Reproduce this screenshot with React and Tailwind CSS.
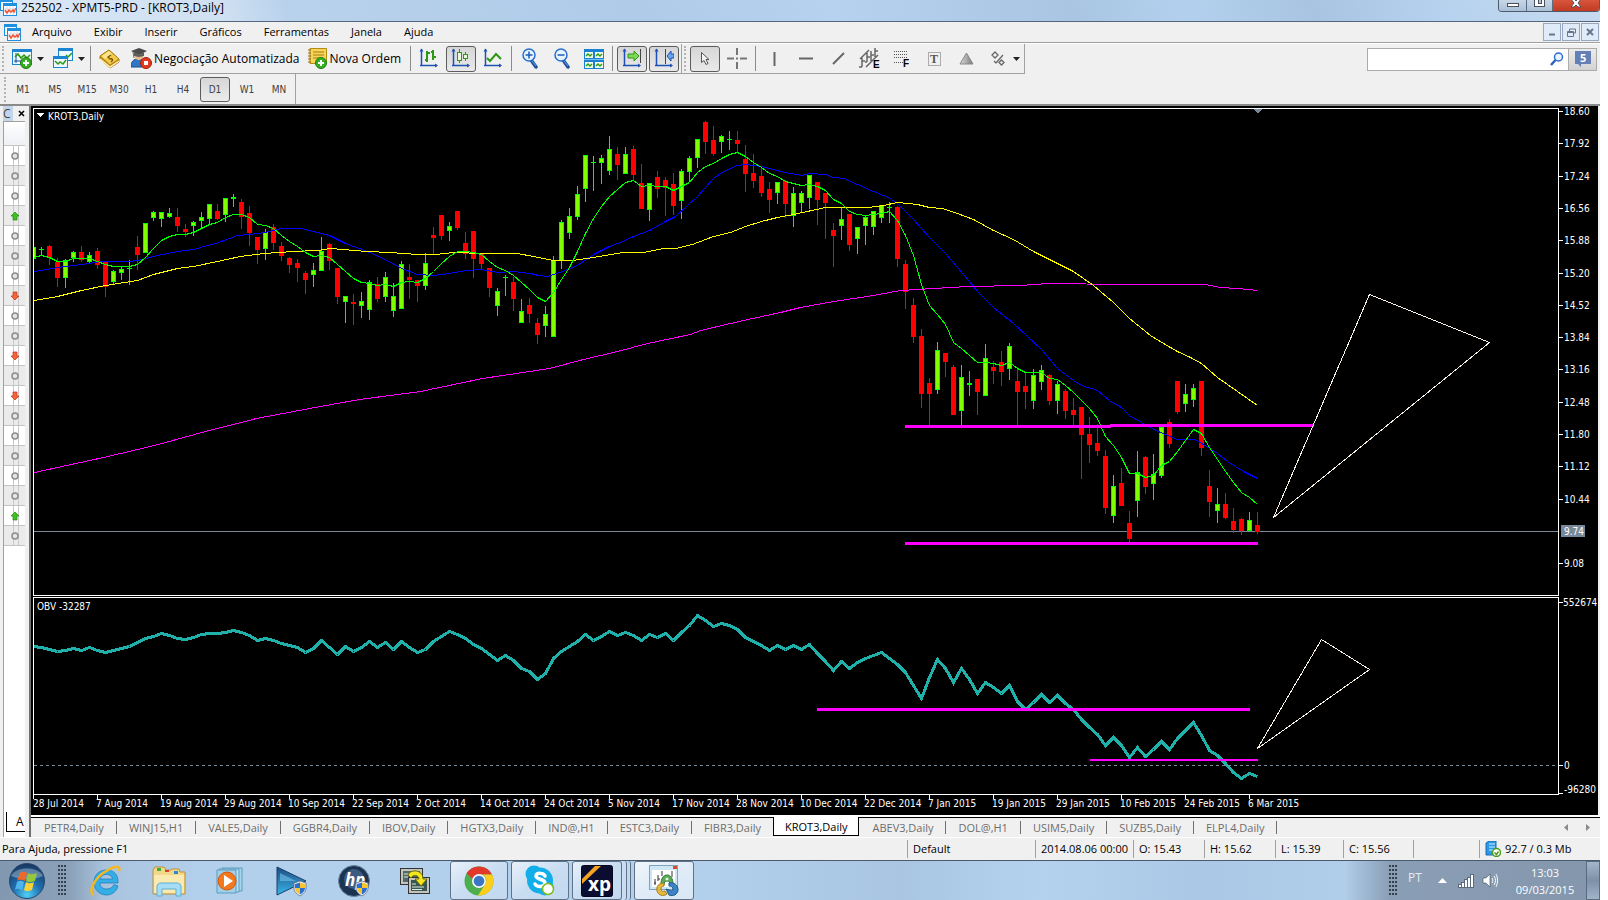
import { useState } from 'react';

// [direction, high, bodyTop, bodyBottom, low]
const CANDLES = [
  ['u', 247, 247, 259, 259], ['u', 247, 249, 250, 255], ['d', 245, 246, 258, 265], ['d', 258, 262, 278, 287],
  ['u', 259, 260, 278, 288], ['u', 251, 252, 258, 262], ['d', 246, 252, 260, 262], ['u', 252, 255, 262, 263],
  ['d', 248, 251, 265, 269], ['d', 262, 262, 287, 297], ['u', 270, 271, 282, 285], ['u', 267, 269, 273, 280],
  ['u', 260, 268, 269, 285], ['d', 236, 247, 255, 270], ['u', 223, 223, 253, 253], ['u', 211, 212, 218, 221],
  ['u', 212, 212, 219, 227], ['u', 208, 213, 217, 218], ['d', 208, 217, 226, 232], ['d', 224, 229, 232, 237],
  ['u', 221, 222, 226, 236], ['u', 212, 217, 221, 228], ['u', 204, 204, 219, 224], ['d', 204, 211, 219, 220],
  ['u', 198, 198, 215, 222], ['u', 194, 197, 199, 207], ['d', 199, 202, 217, 229], ['d', 206, 213, 233, 246],
  ['d', 237, 237, 250, 264], ['u', 229, 232, 249, 260], ['d', 224, 227, 243, 250], ['d', 242, 246, 256, 261],
  ['d', 257, 258, 265, 273], ['d', 259, 263, 268, 282], ['d', 271, 273, 280, 294], ['u', 263, 270, 275, 287],
  ['u', 237, 251, 271, 271], ['d', 243, 244, 261, 270], ['d', 268, 268, 297, 304], ['u', 296, 296, 302, 323],
  ['d', 294, 302, 304, 325], ['u', 292, 301, 306, 318], ['u', 280, 282, 310, 320], ['d', 277, 284, 299, 302],
  ['u', 272, 277, 297, 302], ['u', 283, 296, 311, 317], ['u', 261, 264, 309, 309], ['d', 264, 277, 280, 299],
  ['d', 280, 280, 286, 302], ['u', 253, 263, 286, 290], ['d', 227, 235, 238, 254], ['d', 215, 215, 236, 240],
  ['u', 222, 226, 231, 241], ['d', 211, 211, 228, 230], ['d', 232, 243, 254, 259], ['d', 231, 231, 259, 278],
  ['d', 253, 253, 264, 269], ['d', 268, 268, 288, 297], ['u', 288, 291, 306, 316], ['u', 275, 277, 278, 296],
  ['d', 277, 282, 299, 311], ['u', 299, 311, 323, 323], ['d', 298, 305, 314, 323], ['d', 318, 323, 335, 344],
  ['u', 306, 314, 326, 337], ['u', 256, 260, 337, 337], ['u', 220, 222, 261, 269], ['u', 208, 216, 233, 239],
  ['u', 186, 194, 217, 220], ['u', 155, 155, 189, 202], ['u', 156, 162, 163, 191], ['u', 155, 158, 163, 184],
  ['u', 136, 149, 171, 175], ['d', 147, 154, 165, 180], ['u', 147, 154, 174, 174], ['d', 146, 149, 175, 180],
  ['d', 164, 183, 209, 209], ['u', 183, 183, 210, 221], ['d', 171, 177, 189, 198], ['d', 177, 180, 188, 216],
  ['d', 173, 184, 206, 215], ['u', 169, 171, 201, 219], ['u', 156, 158, 172, 182], ['u', 139, 139, 158, 168],
  ['d', 121, 122, 142, 154], ['d', 126, 140, 154, 156], ['u', 135, 136, 142, 153], ['u', 131, 139, 140, 150],
  ['d', 131, 140, 144, 152], ['d', 145, 159, 174, 192], ['d', 154, 173, 181, 188], ['d', 168, 176, 193, 197],
  ['d', 182, 189, 200, 213], ['u', 182, 182, 193, 204], ['d', 180, 181, 204, 218], ['u', 187, 193, 216, 227],
  ['u', 191, 193, 203, 212], ['u', 175, 175, 198, 209], ['d', 182, 182, 200, 225], ['d', 193, 193, 203, 239],
  ['d', 223, 230, 236, 267], ['u', 208, 219, 226, 240], ['d', 214, 214, 245, 251], ['u', 227, 227, 239, 254],
  ['u', 215, 217, 226, 245], ['u', 211, 211, 227, 235], ['u', 205, 205, 218, 223], ['u', 202, 207, 208, 223],
  ['d', 206, 207, 259, 267], ['d', 260, 264, 292, 309], ['d', 298, 305, 337, 343], ['d', 329, 336, 394, 408],
  ['d', 378, 383, 394, 425], ['u', 342, 350, 390, 394], ['d', 353, 353, 362, 377], ['d', 365, 367, 415, 415],
  ['u', 365, 377, 411, 425], ['u', 371, 383, 385, 396], ['d', 379, 379, 392, 415], ['u', 344, 358, 396, 396],
  ['d', 361, 367, 371, 384], ['d', 351, 362, 372, 386], ['u', 343, 346, 369, 380], ['d', 367, 381, 392, 425],
  ['d', 372, 386, 392, 409], ['u', 369, 375, 401, 409], ['u', 365, 370, 382, 390], ['d', 374, 375, 401, 405],
  ['u', 381, 384, 401, 414], ['d', 389, 391, 411, 419], ['d', 398, 410, 415, 425], ['d', 407, 407, 435, 479],
  ['d', 417, 434, 445, 463], ['d', 424, 443, 451, 456], ['d', 450, 456, 508, 514], ['u', 475, 486, 516, 523],
  ['d', 468, 483, 506, 506], ['d', 511, 523, 539, 542], ['u', 451, 472, 501, 517], ['d', 456, 457, 487, 494],
  ['u', 454, 474, 484, 500], ['u', 426, 427, 476, 478], ['d', 419, 422, 444, 448], ['d', 381, 381, 412, 414],
  ['u', 384, 394, 404, 412], ['u', 384, 388, 400, 407], ['d', 381, 381, 448, 456], ['d', 470, 486, 502, 517],
  ['u', 488, 504, 511, 523], ['d', 493, 504, 518, 519], ['d', 508, 521, 530, 533], ['d', 518, 519, 531, 535],
  ['u', 512, 520, 531, 531], ['d', 512, 525, 532, 534],
];

const MA_FAST = [
  257, 255, 257, 261, 261, 258, 258, 258, 261, 264, 266, 266, 266, 264, 257, 248, 240, 236, 234, 234, 232, 228, 224, 222,
  217, 214, 214, 217, 224, 225, 228, 235, 241, 246, 252, 256, 255, 257, 264, 271, 278, 282, 283, 285, 284, 286, 282, 281,
  282, 278, 271, 263, 256, 251, 251, 252, 254, 261, 267, 270, 275, 282, 289, 297, 301, 292, 279, 267, 251, 233, 218, 206,
  196, 189, 182, 180, 186, 185, 186, 186, 190, 186, 182, 172, 166, 163, 158, 154, 152, 156, 162, 167, 173, 176, 181, 183,
  185, 184, 186, 190, 199, 203, 211, 214, 215, 214, 213, 211, 220, 235, 255, 284, 305, 314, 324, 342, 348, 355, 362, 362,
  363, 365, 362, 368, 372, 372, 372, 378, 379, 385, 392, 400, 408, 418, 436, 445, 457, 473, 473, 477, 475, 465, 461, 451,
  440, 429, 433, 447, 459, 471, 482, 492, 497, 504,
];

const OBV = [
  646, 647, 649, 651, 650, 648, 650, 647, 650, 652, 650, 648, 646, 642, 638, 636, 633, 635, 638, 639, 637, 634, 633, 633,
  632, 630, 632, 635, 640, 638, 640, 643, 645, 647, 652, 648, 640, 647, 654, 646, 651, 647, 641, 647, 642, 649, 641, 647,
  652, 649, 641, 636, 631, 634, 638, 644, 648, 654, 660, 655, 660, 668, 671, 679, 673, 658, 651, 646, 641, 634, 640, 636,
  631, 635, 632, 635, 640, 634, 637, 633, 640, 632, 625, 615, 620, 626, 623, 625, 629, 637, 641, 645, 650, 645, 649, 645,
  649, 644, 653, 661, 670, 661, 668, 662, 658, 655, 652, 658, 664, 672, 685, 698, 677, 659, 668, 682, 668, 679, 693, 682,
  687, 693, 685, 701, 709, 702, 694, 702, 695, 703, 709, 719, 727, 734, 745, 737, 745, 757, 747, 756, 749, 741, 749, 738,
  730, 722, 735, 750, 755, 763, 772, 778, 773, 776,
];

const MA_BLUE =
  '34,271 57,267 89,263 100,261 129,261 137,260 157,255 177,251 193,249 218,242 237,235 249,234 265,232 280,228 300,228 313,231 329,235 345,243 367,251 387,260 399,267 417,274 433,275 449,273 465,270 481,269 497,272 513,271 530,273 538,275 547,276 562,271 577,265 593,254 609,246 620,242 633,236 649,230 665,221 675,216 687,205 697,196 713,178 723,171 737,165 745,164 761,166 780,171 801,175 809,173 825,174 833,177 843,178 857,184 873,191 888,197 897,203 913,219 929,237 945,253 969,281 977,291 993,307 1013,323 1041,349 1057,368 1073,380 1081,385 1097,390 1110,401 1121,407 1129,415 1153,429 1177,439 1195,439 1217,453 1227,461 1243,471 1257,478';
const MA_YELLOW =
  '34,300 57,296 81,290 105,285 137,280 153,274 177,268 193,266 217,261 240,256 263,253 293,251 317,250 330,248 342,249 367,251 390,252 417,254 435,254 453,252 483,253 517,253 533,256 553,260 572,260 593,257 623,252 643,252 663,248 675,248 692,244 713,236 730,232 745,226 761,221 777,217 793,214 825,207 868,207 883,205 897,202 917,204 929,207 942,208 957,213 973,219 993,230 1013,239 1033,251 1057,263 1073,271 1093,285 1113,302 1129,318 1150,335 1163,343 1177,351 1190,357 1201,363 1217,377 1257,405';
const MA_MAGENTA =
  '34,472 103,457 154,445 205,431 256,418 320,406 359,399 420,391 482,378 549,368 583,359 617,351 647,343 690,334 700,330 743,320 780,312 800,307 833,301 867,296 900,290 933,288 967,286 1020,285 1047,283 1123,284 1205,284 1220,287 1237,288 1257,290';

const PRICES = ['18.60', '17.92', '17.24', '16.56', '15.88', '15.20', '14.52', '13.84', '13.16', '12.48', '11.80', '11.12', '10.44', '', '9.08'];
const DATES = [
  '28 Jul 2014', '7 Aug 2014', '19 Aug 2014', '29 Aug 2014', '10 Sep 2014', '22 Sep 2014', '2 Oct 2014', '14 Oct 2014',
  '24 Oct 2014', '5 Nov 2014', '17 Nov 2014', '28 Nov 2014', '10 Dec 2014', '22 Dec 2014', '7 Jan 2015', '19 Jan 2015',
  '29 Jan 2015', '10 Feb 2015', '24 Feb 2015', '6 Mar 2015',
];

const MENU = ['Arquivo', 'Exibir', 'Inserir', 'Gráficos', 'Ferramentas', 'Janela', 'Ajuda'];
const TIMEFRAMES = ['M1', 'M5', 'M15', 'M30', 'H1', 'H4', 'D1', 'W1', 'MN'];
const TABS = [
  'PETR4,Daily', 'WINJ15,H1', 'VALE5,Daily', 'GGBR4,Daily', 'IBOV,Daily', 'HGTX3,Daily', 'IND@,H1', 'ESTC3,Daily',
  'FIBR3,Daily', 'KROT3,Daily', 'ABEV3,Daily', 'DOL@,H1', 'USIM5,Daily', 'SUZB5,Daily', 'ELPL4,Daily',
];
const SIGNALS = 'oooUoooDooDoDoooooUo'.split('');

const barX = (i) => 33 + i * 8;
const toPoints = (values) => values.map((y, i) => `${barX(i)},${y}`).join(' ');

/* ---------- icons ---------- */

function AppIcon() {
  return (
    <svg width="17" height="17" viewBox="0 0 17 17">
      <rect x="0.5" y="0.5" width="12" height="11" fill="#f4fbff" stroke="#1f8fe0" />
      <rect x="0" y="0" width="13" height="3" fill="#1f8fe0" />
      <rect x="3.5" y="4.5" width="13" height="12" fill="#fff" stroke="#1f8fe0" />
      <rect x="3" y="4" width="14" height="3" fill="#1f8fe0" />
      <path d="M4 10h12M4 13h12M7 7v9M10 7v9M13 7v9" stroke="#d8d8e4" strokeWidth="1" fill="none" />
      <path d="M5 11l2 3 2-3 2 2 2-2 1 2 2-4" stroke="#f0522a" strokeWidth="1.4" fill="none" />
    </svg>
  );
}

function PlusBadge({ x, y }) {
  return (
    <g transform={`translate(${x} ${y})`}>
      <circle r="5.5" fill="#35b021" stroke="#1c7c12" />
      <path d="M-3 0h6M0-3v6" stroke="#fff" strokeWidth="2" />
    </g>
  );
}

function NewChartIcon() {
  return (
    <svg width="21" height="21" viewBox="0 0 21 21">
      <rect x="0.5" y="1.5" width="19" height="15" fill="#eef8ff" stroke="#1c84d0" />
      <rect x="0" y="1" width="20" height="3" fill="#1c84d0" />
      <path d="M4 5v10M2 13h15" stroke="#1748a0" fill="none" />
      <path d="M3 9l3-3 3 4 3-3 3 3 3-3" stroke="#2b9a10" strokeWidth="1.5" fill="none" />
      <PlusBadge x={14} y={15} />
    </svg>
  );
}

function ProfilesIcon() {
  return (
    <svg width="21" height="21" viewBox="0 0 21 21">
      <rect x="5.5" y="0.5" width="14" height="12" fill="#eef8ff" stroke="#1c84d0" />
      <rect x="5" y="0" width="15" height="3" fill="#1c84d0" />
      <path d="M13 7l2 2 4-4" stroke="#2b9a10" strokeWidth="1.5" fill="none" />
      <rect x="0.5" y="8.5" width="14" height="11" fill="#eef8ff" stroke="#1c84d0" />
      <rect x="0" y="8" width="15" height="3" fill="#1c84d0" />
      <path d="M2 13l3 3 2-2 3 2 3-4" stroke="#2b9a10" strokeWidth="1.5" fill="none" />
    </svg>
  );
}

function BookIcon() {
  return (
    <svg width="21" height="20" viewBox="0 0 21 20">
      <path d="M1 7l9-6 10 9v3l-9 6L1 10z" fill="#c08a18" stroke="#8f6508" strokeWidth="0.800" />
      <path d="M1 10l10 8 9-6" stroke="#fff0b8" strokeWidth="1.500" fill="none" />
      <path d="M1 7l9-6 10 9-9 6z" fill="#f3cb4a" stroke="#a9780c" strokeWidth="0.800" />
      <path d="M3 7l7-5 3 3-7 5z" fill="#fbe58e" />
      <path d="M12 6l-3 2 2 2c2-1 4 1 1 3" stroke="#7d5604" strokeWidth="1.400" fill="none" />
    </svg>
  );
}

function ExpertIcon() {
  return (
    <svg width="21" height="21" viewBox="0 0 21 21">
      <path d="M0 19c0-6 3-8 7-8s8 2 8 8z" fill="#2f78c8" stroke="#1b4d8c" />
      <circle cx="8" cy="8" r="4" fill="#e8bd8d" />
      <path d="M0 3l8-3 8 3-8 4z" fill="#4b4b4b" />
      <path d="M3 4v4l5 1 5-1V4l-5 3z" fill="#5d5d5d" />
      <path d="M2 4l1 6" stroke="#8a6a2a" />
      <circle cx="15" cy="15" r="5.5" fill="#e23a1e" stroke="#a41e0a" />
      <rect x="13" y="13" width="4" height="4" fill="#fff" />
    </svg>
  );
}

function OrderIcon() {
  return (
    <svg width="21" height="21" viewBox="0 0 21 21">
      <path d="M3 0.5h16.500v15H3z" fill="#f6d558" stroke="#b58a14" />
      <path d="M1 2h3M1 5h3M1 8h3M1 11h3M1 14h3" stroke="#8a6a10" />
      <path d="M6 4h11M6 7h11M6 10h8" stroke="#a37c12" strokeWidth="1" />
      <PlusBadge x={14} y={15} />
    </svg>
  );
}

function AxisIcon({ children }) {
  return (
    <svg width="20" height="21" viewBox="0 0 20 21">
      <path d="M2.500 1v17M1 17.500h17" stroke="#1f50b4" strokeWidth="1.500" fill="none" />
      <path d="M0.500 3.500l2-3 2 3zM16 15.500l3 2-3 2z" fill="#1f50b4" />
      {children}
    </svg>
  );
}

function Magnifier({ plus }) {
  return (
    <svg width="17" height="21" viewBox="0 0 17 21">
      <path d="M9 12l5 7" stroke="#1d4c9c" strokeWidth="3.500" strokeLinecap="round" />
      <path d="M10 13l4 5" stroke="#5b93dc" strokeWidth="1.200" />
      <circle cx="7" cy="7" r="6" fill="#e6f4ff" stroke="#2a6fc9" strokeWidth="1.500" />
      <path d={plus ? 'M3.500 7h7M7 3.500v7' : 'M3.500 7h7'} stroke="#1c5ab8" strokeWidth="1.500" />
    </svg>
  );
}

function TileIcon() {
  return (
    <svg width="20" height="20" viewBox="0 0 20 20">
      <rect width="20" height="20" fill="#1a80d4" />
      {[[1, 3], [11, 3], [1, 13], [11, 13]].map(([x, y]) => (
        <g key={`${x}-${y}`}>
          <rect x={x} y={y} width="8" height="6" fill="#effae8" />
          <path d={`M${x + 1} ${y + 4}l2-2 2 2 2-2`} stroke="#2b9a10" strokeWidth="1.400" fill="none" />
        </g>
      ))}
      <path d="M0 10.500h20" stroke="#7cc2f4" />
    </svg>
  );
}

function Caret() {
  return (
    <svg width="7" height="4" viewBox="0 0 7 4" className="shrink-0">
      <path d="M0 0h7L3.500 4z" fill="#222" />
    </svg>
  );
}

function ShieldBadge({ x, y }) {
  return (
    <g transform={`translate(${x} ${y})`}>
      <path d="M6 0l6 2v5c0 4-3 6-6 8-3-2-6-4-6-8V2z" fill="#f0f4fa" stroke="#5b6c80" strokeWidth="0.800" />
      <path d="M6 1.500V7H1V3zM11 7c0 3-2 5-5 6.500V7z" fill="#2c6fd0" />
      <path d="M6 1.500V7h5V3zM1 7c0 3 2 5 5 6.500V7z" fill="#f6c42c" />
    </g>
  );
}

/* ---------- window chrome ---------- */

function TitleBar() {
  return (
    <header className="flex h-[22px] shrink-0 items-start justify-between border-b border-[#56677d] bg-[linear-gradient(75deg,#dbe8f6_0%,#cfe0f2_14%,#b9d2ec_18%,#afcbe8_40%,#b7d2ee_52%,#a9c5e2_67%,#b3d0ee_74%,#a8c4e0_82%,#b6d2ee_90%,#c6daf0_100%)]">
      <div className="flex h-[15px] items-center gap-1 overflow-visible">
        <AppIcon />
        <h1 className="text-[12px] leading-[14px] text-black">252502 - XPMT5-PRD - [KROT3,Daily]</h1>
      </div>
      <div className="flex h-3 overflow-hidden rounded-b-[4px] border border-t-0 border-[#4c5a6c]">
        <button aria-label="Minimizar" className="flex w-7 justify-center border-r border-[#5f6d80] bg-gradient-to-b from-[#c7d7e8] to-[#a9c0d8] pt-[3px]">
          <span className="h-1 w-3 border border-[#4a4f5a] bg-white" />
        </button>
        <button aria-label="Restaurar" className="flex w-[26px] justify-center border-r border-[#5f6d80] bg-gradient-to-b from-[#c7d7e8] to-[#a9c0d8]">
          <span className="flex h-[7px] w-[11px] items-start justify-center border border-t-0 border-[#4a4f5a] bg-white">
            <span className="h-1 w-1 border border-t-0 border-[#4a4f5a] bg-[#b0c4da]" />
          </span>
        </button>
        <button aria-label="Fechar" className="flex w-[46px] justify-center bg-gradient-to-b from-[#d9553c] to-[#c23a22]">
          <svg width="12" height="8" viewBox="0 0 12 8">
            <path d="M1 7l3-4-3-4h3l2 2 2-2h3L8 3l3 4H8L6 5 4 7z" fill="#fff" stroke="#444b58" strokeWidth="0.900" />
          </svg>
        </button>
      </div>
    </header>
  );
}

function MenuBar() {
  const box = 'flex h-[18px] w-[18px] items-center justify-center border border-[#98a9bf] bg-[#dfebf9] text-[#66768c]';
  return (
    <nav className="flex h-[21px] shrink-0 items-center justify-between border-b border-[#a0a0a0] bg-[#f0f0f0] pr-[1px] pl-1">
      <div className="flex items-center">
        <AppIcon />
        <ul className="flex items-center gap-[22px] pl-[11px]">
          {MENU.map((item) => (
            <li key={item} className="flex">
              <button className="text-[11px] leading-[16px] text-black">{item}</button>
            </li>
          ))}
        </ul>
      </div>
      <div className="flex gap-[1px]">
        <button aria-label="Minimizar gráfico" className={box}>
          <svg width="8" height="8"><path d="M1 6.500h6" stroke="currentColor" strokeWidth="2" /></svg>
        </button>
        <button aria-label="Restaurar gráfico" className={box}>
          <svg width="9" height="9"><path d="M2.500 3V1h6v4H6.500M0.500 3.500h6v5h-6zM0 4.500h7" stroke="currentColor" fill="none" /></svg>
        </button>
        <button aria-label="Fechar gráfico" className={box}>
          <svg width="8" height="8"><path d="M1 1l6 6M7 1L1 7" stroke="currentColor" strokeWidth="2" /></svg>
        </button>
      </div>
    </nav>
  );
}

function ToolButton({ label, pressed, children }) {
  return (
    <button
      aria-label={label}
      className={`flex h-[26px] w-[30px] shrink-0 items-center justify-center rounded-[3px] border ${
        pressed ? 'border-[#5c5c5c] bg-gradient-to-b from-[#d6d6d6] to-[#e9e9e9]' : 'border-transparent'
      }`}
    >
      {children}
    </button>
  );
}

const Grip = () => <span className="h-[25px] shrink-0 border-l-2 border-dotted border-[#b4b4b4]" />;
const Sep = () => <span className="mx-[3px] h-[25px] w-[1px] shrink-0 bg-[#8c8c8c]" />;

function MainToolbar() {
  return (
    <div className="flex h-[30px] shrink-0 items-stretch justify-between bg-[#f0f0f0] pr-[3px]">
      <div className="flex items-center border-r border-b border-[#a0a0a0] pr-1 pl-[2px]">
        <Grip />
        <button aria-label="Novo gráfico" className="ml-2 flex items-center gap-1"><NewChartIcon /><Caret /></button>
        <button aria-label="Perfis" className="mr-[2px] ml-[9px] flex items-center gap-1"><ProfilesIcon /><Caret /></button>
        <Sep />
        <button aria-label="Observação do mercado" className="ml-[5px]"><BookIcon /></button>
        <button className="ml-[11px] flex items-center gap-[2px] text-[12px]"><ExpertIcon />Negociação Automatizada</button>
        <button className="mr-[6px] ml-[7px] flex items-center gap-[2px] text-[12px]"><OrderIcon />Nova Ordem</button>
        <Sep />
        <ToolButton label="Barras">
          <AxisIcon><path d="M8 3v11M6 12h2M8 5h3M14 2v10M12 4h2M14 9h3" stroke="#2b9a10" strokeWidth="2" fill="none" /></AxisIcon>
        </ToolButton>
        <span className="w-[2px]" />
        <ToolButton label="Velas" pressed>
          <AxisIcon><path d="M8.500 1v14M14.500 4v9" stroke="#2b9a10" /><rect x="6.500" y="4.500" width="4" height="8" fill="#eaf8e2" stroke="#2b9a10" /><rect x="12.500" y="6.500" width="4" height="4" fill="#eaf8e2" stroke="#2b9a10" /></AxisIcon>
        </ToolButton>
        <span className="w-[2px]" />
        <ToolButton label="Linha">
          <AxisIcon><path d="M4 10l3 3 6-7 5 5" stroke="#2b9a10" strokeWidth="2" fill="none" /></AxisIcon>
        </ToolButton>
        <Sep />
        <ToolButton label="Ampliar"><Magnifier plus /></ToolButton>
        <span className="w-[2px]" />
        <ToolButton label="Reduzir"><Magnifier /></ToolButton>
        <span className="w-[2px]" />
        <ToolButton label="Lado a lado"><TileIcon /></ToolButton>
        <Sep />
        <span className="w-[1px]" />
        <ToolButton label="Rolagem automática" pressed>
          <AxisIcon><path d="M18.500 1v14" stroke="#444" /><path d="M6 6h6V3l5 5-5 5v-3H6z" fill="#7ed957" stroke="#2b9a10" /></AxisIcon>
        </ToolButton>
        <span className="w-[2px]" />
        <ToolButton label="Deslocar gráfico" pressed>
          <AxisIcon><path d="M11.500 1v15" stroke="#444" /><path d="M20 6h-3V3l-4 5 4 5v-3h3z" fill="#6aa5f0" stroke="#1f50b4" /></AxisIcon>
        </ToolButton>
        <span className="mr-[2px] ml-[2px] h-full w-[1px] bg-[#a0a0a0]" />
        <Grip />
        <span className="w-1" />
        <ToolButton label="Cursor" pressed>
          <svg width="12" height="15"><path d="M2.500 1.500v10l2.500-2 2 4 2-1-2-4h3z" fill="#f4f4f4" stroke="#555" /></svg>
        </ToolButton>
        <span className="w-[2px]" />
        <ToolButton label="Mira">
          <svg width="20" height="21"><path d="M0 10.500h7M13 10.500h7M10 0v7M10 14v7M9 10.500h2" stroke="#777" strokeWidth="2" /></svg>
        </ToolButton>
        <Sep />
        <ToolButton label="Linha vertical"><svg width="3" height="14"><path d="M1.500 0v14" stroke="#666" strokeWidth="2" /></svg></ToolButton>
        <span className="w-[2px]" />
        <ToolButton label="Linha horizontal"><svg width="14" height="3"><path d="M0 1.500h14" stroke="#666" strokeWidth="2" /></svg></ToolButton>
        <span className="w-[2px]" />
        <ToolButton label="Linha de tendência"><svg width="13" height="13"><path d="M1 12L12 1" stroke="#666" strokeWidth="2" /></svg></ToolButton>
        <span className="w-[2px]" />
        <ToolButton label="Canal">
          <svg width="22" height="21">
            <path d="M1 11L10 2M7 19L19 7M3 10v9M0 19h3M3 13h3M8 5v9M6 14h2M8 9h3M12 3v10M12 7h3M16 0v9M16 3h3" stroke="#666" strokeWidth="1.500" fill="none" />
            <text x="14" y="20" fontSize="10" fontWeight="bold" fontFamily="Liberation Sans, sans-serif">E</text>
          </svg>
        </ToolButton>
        <span className="w-[2px]" />
        <ToolButton label="Fibonacci">
          <svg width="16" height="18">
            <path d="M0 1.500h14M0 4.500h14M0 7.500h14M0 12.500h9" stroke="#555" strokeDasharray="1 1" />
            <text x="9" y="17" fontSize="10" fontWeight="bold" fontFamily="Liberation Sans, sans-serif">F</text>
          </svg>
        </ToolButton>
        <span className="w-[2px]" />
        <ToolButton label="Texto">
          <svg width="15" height="16">
            <rect x="1.500" y="1.500" width="12" height="13" fill="none" stroke="#666" strokeDasharray="1 1" />
            <text x="3" y="12" fontSize="12" fontWeight="bold" fill="#555" fontFamily="Liberation Serif, serif">T</text>
          </svg>
        </ToolButton>
        <span className="w-[2px]" />
        <ToolButton label="Formas">
          <svg width="15" height="13">
            <defs><linearGradient id="tri"><stop offset="0" stopColor="#ddd" /><stop offset="1" stopColor="#777" /></linearGradient></defs>
            <path d="M7.500 1L14 12H1z" fill="url(#tri)" stroke="#888" />
          </svg>
        </ToolButton>
        <button aria-label="Setas" className="ml-[10px] flex items-center gap-2">
          <svg width="14" height="15">
            <path d="M4 1l3 3-3 3-3-3zM10.500 9l2.500 2.500-2.500 2.500L8 11.500zM3 10l2 2M5 12l7-8" stroke="#666" strokeWidth="1.300" fill="none" />
          </svg>
          <Caret />
        </button>
      </div>
      <form className="flex items-center" onSubmit={(e) => e.preventDefault()}>
        <label className="flex h-[23px] w-[202px] items-center justify-between border border-[#ababab] bg-white pr-1">
          <input type="text" aria-label="Pesquisar" className="min-w-0 flex-1 px-1 text-[12px] outline-none" />
          <svg width="14" height="14">
            <path d="M5.500 8L1 13" stroke="#2a62c4" strokeWidth="2.500" />
            <circle cx="8.500" cy="5" r="4" fill="#eaf4ff" stroke="#2f6cd0" strokeWidth="1.500" />
          </svg>
        </label>
        <button aria-label="Mensagens" className="-ml-[1px] flex h-[23px] w-[29px] items-center justify-center border border-[#ababab] bg-gradient-to-b from-[#ececec] to-[#d2d2d2]">
          <svg width="16" height="16">
            <path d="M0 0h16v13H6v3l-3-3H0z" fill="#6480b4" />
            <text x="5" y="11" fontSize="11" fontWeight="bold" fill="#fff" fontFamily="Open Sans, sans-serif">5</text>
          </svg>
        </button>
      </form>
    </div>
  );
}

function TimeframeBar() {
  const [active, setActive] = useState('D1');
  return (
    <div className="flex h-8 shrink-0 items-stretch border-b-2 border-[#8a8a8a] bg-[#f0f0f0]">
      <div className="flex items-center gap-[2px] border-r border-[#a0a0a0] pr-[1px] pl-1">
        <Grip />
        {TIMEFRAMES.map((tf) => (
          <button
            key={tf}
            onClick={() => setActive(tf)}
            className={`h-[25px] w-[30px] rounded-[3px] border font-['DejaVu_Sans_Condensed','DejaVu_Sans',sans-serif] text-[10px] text-[#404040] ${
              tf === active ? 'border-[#5c5c5c] bg-gradient-to-b from-[#d6d6d6] to-[#ececec]' : 'border-transparent'
            }`}
          >
            {tf}
          </button>
        ))}
      </div>
    </div>
  );
}

function SignalIcon({ kind }) {
  if (kind === 'U') {
    return <svg width="10" height="10"><path d="M5 1l4 4H7v4H3V5H1z" fill="#3fbf22" stroke="#228a10" strokeWidth="0.700" /></svg>;
  }
  if (kind === 'D') {
    return <svg width="10" height="10"><path d="M5 9l4-4H7V1H3v4H1z" fill="#f2643c" stroke="#c03410" strokeWidth="0.700" /></svg>;
  }
  return <svg width="8" height="8"><circle cx="4" cy="4" r="3" fill="#e4e4e4" stroke="#8c8c8c" strokeWidth="1.500" /></svg>;
}

function SidePanel() {
  return (
    <aside className="flex w-[31px] shrink-0 flex-col border-r-2 border-[#707070] bg-[#f0f0f0] pr-1 pl-[3px]">
      <div className="flex h-[15px] items-center justify-between">
        <span className="w-[10px] bg-[#c3d5ea] text-[12px] leading-[15px] text-[#444]">C</span>
        <button aria-label="Fechar painel" className="flex"><svg width="7" height="7"><path d="M1 1l5 5M6 1L1 6" stroke="#000" strokeWidth="1.600" /></svg></button>
      </div>
      <div className="flex min-h-0 flex-1 flex-col border-t border-l border-[#a0a0a0] bg-white">
        <div className="h-6 border-b border-[#c4c4c4] bg-gradient-to-b from-white to-[#eef0f4]" />
        <ul>
          {SIGNALS.map((s, i) => (
            <li
              key={i}
              className={`flex h-5 items-center justify-center border-b border-[#c4c4c4] bg-[linear-gradient(90deg,transparent_9px,#c8c8c8_9px,#c8c8c8_10px,transparent_10px,transparent_14px,#c8c8c8_14px,#c8c8c8_15px,transparent_15px)] ${
                i % 2 ? 'bg-[#ebebeb]' : 'bg-white'
              }`}
            >
              <SignalIcon kind={s} />
            </li>
          ))}
        </ul>
        <div className="min-h-0 flex-1" />
        <button className="mb-[5px] ml-[2px] h-5 border-b border-l border-black bg-white pl-[9px] text-left text-[12px] leading-[18px]">A</button>
      </div>
    </aside>
  );
}

/* ---------- chart ---------- */

const AXIS_FONT = "font-['DejaVu_Sans_Condensed','DejaVu_Sans',sans-serif] text-[10px]";

function PricePane() {
  return (
    <section className="flex min-h-0 flex-1">
      <div className="min-w-0 flex-1 border border-white">
        <svg width="100%" height="100%" shapeRendering="crispEdges" className="block">
          <g transform="translate(-34 -109)">
            <rect x="34" y="531" width="100%" height="1" fill="#778899" />
            {CANDLES.map(([dir, high, top, bottom, low], i) => {
              const x = barX(i);
              const up = dir === 'u';
              return (
                <g key={i} fill={up ? '#00ff00' : '#ff0000'}>
                  <rect x={x} y={high} width="1" height={low - high} />
                  <rect x={x - 2} y={top} width="5" height={bottom - top} />
                  {up && bottom - top > 2 && <rect x={x - 1} y={top + 1} width="3" height={bottom - top - 2} fill="#7fff00" />}
                </g>
              );
            })}
            <path d="M1253 109h9l-4 5z" fill="#778899" />
          </g>
          <g transform="translate(-33.5 -108.5)" fill="none">
            <polyline points={MA_BLUE} stroke="#0000ff" />
            <polyline points={MA_MAGENTA} stroke="#ff00ff" />
            <polyline points={MA_YELLOW} stroke="#ffff00" />
            <polyline points={toPoints(MA_FAST)} stroke="#00ff00" />
            <path d="M904 426H1110M1109 425H1313M904 543H1257" stroke="#ff00ff" strokeWidth="3" />
            <path d="M1369 294L1489 342L1273 517z" stroke="#faf0e6" />
          </g>
          <path d="M3 4h7l-3.500 4z" fill="#fff" />
          <text x="14" y="11" fill="#fff" className={AXIS_FONT}>KROT3,Daily</text>
        </svg>
      </div>
      <svg width="39" height="488" className="shrink-0 overflow-visible" shapeRendering="crispEdges">
        {PRICES.map((price, i) => {
          const y = Math.round(3 + i * 32.3);
          return price && (
            <g key={price} fill="#fff">
              <rect y={y} width="4" height="1" />
              <text x="5" y={y + 4} className={AXIS_FONT}>{price}</text>
            </g>
          );
        })}
        <rect x="2" y="417" width="24" height="12" fill="#778899" />
        <text x="5" y="427" fill="#fff" className={AXIS_FONT}>9.74</text>
      </svg>
    </section>
  );
}

function ObvPane() {
  return (
    <section className="flex h-[198px] shrink-0">
      <div className="min-w-0 flex-1 border border-white">
        <svg width="100%" height="100%" shapeRendering="crispEdges" className="block">
          <line x1="0" x2="100%" y1="167.500" y2="167.500" stroke="#778899" strokeDasharray="3 3" />
          <g transform="translate(-33.5 -597.5)" fill="none">
            <polyline points={toPoints(OBV)} stroke="#20b2aa" strokeWidth="3" />
            <path d="M816 709H1249" stroke="#ff00ff" strokeWidth="3" />
            <path d="M1089 759H1257" stroke="#ff00ff" strokeWidth="2" />
            <path d="M1321 639L1369 669L1257 748z" stroke="#faf0e6" />
          </g>
          <text x="3" y="12" fill="#fff" className={AXIS_FONT}>OBV -32287</text>
        </svg>
      </div>
      <svg width="39" height="198" className="shrink-0 overflow-visible" shapeRendering="crispEdges" fill="#fff">
        <rect y="5" width="4" height="1" /><text x="4" y="9" className={AXIS_FONT}>552674</text>
        <rect y="168" width="4" height="1" /><text x="5" y="172" className={AXIS_FONT}>0</text>
        <rect y="196" width="4" height="1" /><text x="5" y="196" className={AXIS_FONT}>-96280</text>
      </svg>
    </section>
  );
}

function ChartWindow() {
  return (
    <div className="flex min-h-0 flex-1 flex-col bg-black pt-[2px] pl-[2px]">
      <PricePane />
      <div className="h-[1px] shrink-0" />
      <ObvPane />
      <svg height="20" className="block w-full shrink-0" shapeRendering="crispEdges" fill="#fff">
        {DATES.map((date, i) => (
          <g key={date}>
            <rect x={i * 64} width="1" height="4" />
            <text x={i === 0 ? 0 : i * 64 - 1} y="12" className={AXIS_FONT}>{date}</text>
          </g>
        ))}
      </svg>
    </div>
  );
}

function ChartTabs() {
  const [current, setCurrent] = useState('KROT3,Daily');
  return (
    <div className="flex h-5 shrink-0 justify-between border-t border-black bg-[#f0f0f0] pr-[10px] text-[11px]">
      <div className="flex">
        {TABS.map((tab, i) => {
          const on = tab === current;
          return (
            <button
              key={tab}
              onClick={() => setCurrent(tab)}
              className={
                on
                  ? '-mt-[1px] h-[19px] border border-t-0 border-black bg-white px-[11px] leading-[17px] text-black'
                  : `flex h-[19px] items-center leading-[17px] text-[#6d6d6d] before:h-[13px] before:w-[1px] before:content-[''] ${
                      i === 0 || TABS[i - 1] === current ? 'before:bg-transparent' : 'before:bg-[#707070]'
                    }`
              }
            >
              <span className={on ? '' : 'px-3'}>{tab}</span>
            </button>
          );
        })}
        <span className="mt-[3px] h-[13px] w-[1px] bg-[#707070]" />
      </div>
      <div className="flex items-center gap-[18px]">
        <button aria-label="Abas anteriores"><svg width="4" height="7"><path d="M4 0v7L0 3.500z" fill="#8a8a8a" /></svg></button>
        <button aria-label="Próximas abas"><svg width="4" height="7"><path d="M0 0v7l4-3.500z" fill="#8a8a8a" /></svg></button>
      </div>
    </div>
  );
}

function StatusBar() {
  const cell = 'flex items-center border-l border-[#a0a0a0] h-[18px] pl-[5px] shrink-0';
  return (
    <footer className="flex h-[23px] shrink-0 items-center border-t border-white bg-[#f0f0f0] text-[11px] leading-[16px] whitespace-nowrap text-black">
      <span className="flex-1 pl-[2px]">Para Ajuda, pressione F1</span>
      <span className={`${cell} w-32`}>Default</span>
      <span className={`${cell} w-[98px]`}>2014.08.06 00:00</span>
      <span className={`${cell} w-[71px]`}>O: 15.43</span>
      <span className={`${cell} w-[71px]`}>H: 15.62</span>
      <span className={`${cell} w-[68px]`}>L: 15.39</span>
      <span className={`${cell} w-[70px]`}>C: 15.56</span>
      <span className={`${cell} w-[66px]`} />
      <span className={`${cell} w-[121px] gap-1`}>
        <svg width="16" height="16">
          <path d="M1 2l3-2h7v12l-2 2H1z" fill="#2a9ae8" stroke="#1b6cb0" />
          <path d="M4 3h6M4 6h6M4 9h4" stroke="#d6efff" />
          <circle cx="11.500" cy="11.500" r="4" fill="#fff" stroke="#4a9a1c" strokeWidth="1.500" />
          <path d="M9.500 11.500l2 2 2-3" stroke="#4a9a1c" strokeWidth="1.500" fill="none" />
        </svg>
        92.7 / 0.3 Mb
      </span>
    </footer>
  );
}

/* ---------- taskbar ---------- */

function StartOrb() {
  return (
    <svg width="38" height="38" viewBox="0 0 38 38">
      <defs>
        <radialGradient id="orb" cx="0.5" cy="0.9" r="0.9">
          <stop offset="0" stopColor="#4fd0f6" /><stop offset="0.45" stopColor="#1f6fae" /><stop offset="1" stopColor="#17365e" />
        </radialGradient>
      </defs>
      <circle cx="19" cy="19" r="17.500" fill="url(#orb)" stroke="#27486e" />
      <path d="M3 14C7 4 31 4 35 14c-8 4-24 4-32 0z" fill="#fff" opacity="0.300" />
      <path d="M12 11c3-2 5-1 7 0l-2 8c-3-1-5-2-8 0z" fill="#ee6a2a" />
      <path d="M20 11c3 2 6 1 9 0l-2 8c-3 1-6 2-9 0z" fill="#96c83c" />
      <path d="M9 20c3-2 5-1 7 0l-2 8c-3-1-5-2-7 0z" fill="#52b4ec" />
      <path d="M18 20c3 2 6 1 8 0l-2 8c-3 1-5 2-8 0z" fill="#fcd23c" />
    </svg>
  );
}

function DotGrip() {
  return (
    <svg width="9" height="31" className="shrink-0">
      {[0, 3, 6].map((x) => (
        <path key={x} d={`M${x + 1} 0v31`} stroke="#33414f" strokeWidth="2" strokeDasharray="2 2" />
      ))}
    </svg>
  );
}

function IeIcon() {
  return (
    <svg width="32" height="32" viewBox="0 0 32 32">
      <path d="M24 19.500c-1.500 3-4 4.500-7.500 4.500-4 0-6.500-2.500-6.800-6H28c.6-8-4-13-11.500-13S4 10 4 17s5 13 12.500 13c5.500 0 10-3.500 11.500-9zM10 14c.8-3 3-4.500 6.500-4.500s5.500 1.500 6 4.500z" fill="#35aee6" stroke="#1779b8" strokeWidth="0.700" />
      <path d="M3 30c-5-5 3-19 15-25C25 1 31 0 29 6" fill="none" stroke="#f5b81f" strokeWidth="2.500" />
    </svg>
  );
}

function FolderIcon() {
  return (
    <svg width="34" height="32" viewBox="0 0 34 32">
      <path d="M1 5l2-3h9l2 3h5l1-1h7l1 3h5v22H1z" fill="#f2d888" stroke="#b8923c" />
      <path d="M5 3h4v3H5z" fill="#3fae3c" /><path d="M13 5h4v2h-4z" fill="#d8412c" /><path d="M22 6h4v3h-4z" fill="#2c86d0" />
      <path d="M2 10h30v18H2z" fill="#fbeab0" />
      <path d="M5 31v-9c0-3 2-4 4-4h16c2 0 4 1 4 4v9h-5v-7H10v7z" fill="#a6dcf4" stroke="#5ab0d8" />
    </svg>
  );
}

function PlayerIcon() {
  return (
    <svg width="30" height="28" viewBox="0 0 30 28">
      <path d="M6 1h20v23H6z" fill="#a6d4ea" stroke="#5a9cc0" />
      <path d="M3 2h20v23H3z" fill="#bde0f0" stroke="#5a9cc0" />
      <path d="M1 3h19v23H1z" fill="#a0cfe8" stroke="#5a9cc0" />
      <circle cx="11" cy="14" r="9" fill="#f4781e" stroke="#d4580c" />
      <path d="M8 8l9 6-9 6z" fill="#fff" />
    </svg>
  );
}

function ProPlayIcon() {
  return (
    <svg width="32" height="32" viewBox="0 0 32 32">
      <defs><linearGradient id="pp" x2="0" y2="1"><stop offset="0" stopColor="#1d4c84" /><stop offset="1" stopColor="#3ab4e8" /></linearGradient></defs>
      <path d="M1 2l29 14L1 30z" fill="url(#pp)" stroke="#1d3e66" />
      <path d="M4 8l16 8H4z" fill="#7fd0f4" opacity="0.500" />
      <ShieldBadge x={18} y={16} />
    </svg>
  );
}

function HpIcon() {
  return (
    <svg width="32" height="32" viewBox="0 0 32 32">
      <circle cx="16" cy="16" r="15.500" fill="#1d3450" stroke="#6c88a8" />
      <circle cx="16" cy="14" r="10" fill="#3c5c80" />
      <text x="7" y="21" fontSize="17" fontStyle="italic" fontWeight="bold" fill="#fff" fontFamily="Open Sans, sans-serif">hp</text>
      <ShieldBadge x={18} y={16} />
    </svg>
  );
}

function ScreensIcon() {
  return (
    <svg width="30" height="28" viewBox="0 0 30 28">
      <rect x="0.500" y="1.500" width="22" height="16" fill="#c4c4bc" stroke="#333" />
      <rect x="3" y="4" width="17" height="11" fill="#4f6a68" />
      <rect x="8.500" y="10.500" width="21" height="16" fill="#c4c4bc" stroke="#333" />
      <rect x="11" y="13" width="16" height="11" fill="#3a5654" />
      <path d="M12 17h4M12 20h12M12 22.500h10M4 7h4M4 10h4" stroke="#dcece0" />
      <path d="M8 8c2-6 15-6 15 4h4l-6 7-6-7h4c0-4-6-5-8-1z" fill="#f4e61e" stroke="#6a6a00" />
    </svg>
  );
}

function ChromeIcon() {
  return (
    <svg width="30" height="30" viewBox="0 0 30 30">
      <circle cx="15" cy="15" r="14.500" fill="#4cae4c" />
      <path d="M2.500 7.500A14.500 14.500 0 0 1 28 8.500H15a6.500 6.500 0 0 0-6 4.500z" fill="#e2382c" />
      <path d="M28 8.500A14.500 14.500 0 0 1 14 29.500l7-11a6.500 6.500 0 0 0-3-10z" fill="#fbcd1c" />
      <circle cx="15" cy="15" r="7" fill="#f4f6fa" />
      <circle cx="15" cy="15" r="5.300" fill="#3a76c4" />
    </svg>
  );
}

function SkypeIcon() {
  return (
    <svg width="30" height="31" viewBox="0 0 30 31">
      <circle cx="9" cy="9" r="8.500" fill="#11aeea" /><circle cx="20" cy="22" r="8.500" fill="#11aeea" /><circle cx="15" cy="15.500" r="13" fill="#11aeea" />
      <path d="M20 11c-1-3-9-4-9 0s9 2.500 9 7-8 4.500-10 1" fill="none" stroke="#fff" strokeWidth="3.500" strokeLinecap="round" />
      <circle cx="23" cy="24" r="5.500" fill="#fff" stroke="#7cbc1c" strokeWidth="1.500" />
    </svg>
  );
}

function XpIcon() {
  return (
    <svg width="32" height="32" viewBox="0 0 32 32">
      <rect x="0.500" y="0.500" width="31" height="31" rx="2" fill="#0a0c30" stroke="#05061c" />
      <path d="M1 14L14 1h6L1 19z" fill="#f4a41e" />
      <text x="7" y="26" fontSize="19" fontWeight="bold" fill="#fff" fontFamily="Open Sans, sans-serif">xp</text>
    </svg>
  );
}

function MetaIcon() {
  return (
    <svg width="32" height="32" viewBox="0 0 32 32">
      <rect x="1.500" y="0.500" width="28" height="24" fill="#cfe6f4" stroke="#7ca4c0" />
      <rect x="4" y="5" width="23" height="17" fill="#fff" />
      <rect x="25" y="1" width="4" height="3" fill="#d84a34" />
      <path d="M7 14v6M10 10v6M14 6v5M24 6v6M8 18h-2M10 14h2" stroke="#333" fill="none" />
      <path d="M13 19c0-5 2-9 6-9s6 4 6 9l-3 1c0-3-1-4-3-4s-3 1-3 4z" fill="#5caa58" stroke="#2f7438" />
      <path d="M16 18c-5 0-8 3-7 8 1 4 6 6 10 3l-2-3c-2 1-4 0-4-2s1-3 3-3z" fill="#e4b83c" stroke="#a87c14" />
      <path d="M21 18c5-1 9 2 9 7 0 4-5 7-9 5l-3-6 3 1c2 1 4 1 4-1s-2-3-4-3z" fill="#3c84c8" stroke="#1f568c" />
      <circle cx="19" cy="14" r="1.500" fill="#e8f4e8" />
    </svg>
  );
}

function Taskbar() {
  const task = 'flex h-[39px] items-center justify-center rounded-[3px] border border-[#5f7288] bg-gradient-to-br from-white/70 via-white/30 to-white/20';
  return (
    <div className="flex h-10 shrink-0 items-center justify-between border-t border-[#4a5b70] bg-[linear-gradient(90deg,#8298b0_0px,#8ba1b9_70px,#a9c3de_105px,#b2cfec_200px,#b2cfec_700px,#a9c5e2_900px,#b4d2ee_1040px,#abc8e6_1200px,#b0cdea_1345px,#8a9eb5_1390px,#8396ac_100%)]">
      <div className="flex items-center">
        <button aria-label="Iniciar" className="ml-2"><StartOrb /></button>
        <span className="w-3" />
        <DotGrip />
        <div className="flex items-center gap-[30px] pr-5 pl-[23px]">
          <button aria-label="Internet Explorer"><IeIcon /></button>
          <button aria-label="Explorador de arquivos"><FolderIcon /></button>
          <button aria-label="Media Player"><PlayerIcon /></button>
          <button aria-label="Player Pro"><ProPlayIcon /></button>
          <button aria-label="HP"><HpIcon /></button>
          <button aria-label="Conexão remota"><ScreensIcon /></button>
        </div>
        <div className="flex items-center gap-[3px]">
          <button aria-label="Chrome" className={`${task} w-[58px]`}><ChromeIcon /></button>
          <button aria-label="Skype" className={`${task} w-[58px]`}><SkypeIcon /></button>
          <div className="flex">
            <button aria-label="XP" className={`${task} w-[50px]`}><XpIcon /></button>
            <span className="h-[39px] w-[5px] rounded-r-[3px] border-r border-[#5f7288] bg-white/30" />
            <span className="h-[39px] w-[4px] rounded-r-[3px] border-r border-[#5f7288] bg-white/20" />
          </div>
          <button aria-label="MetaTrader" className={`${task} w-[60px] from-white/80 via-white/60 to-white/50`}><MetaIcon /></button>
        </div>
      </div>
      <div className="flex h-full items-center text-[11px] leading-[17px] text-white">
        <DotGrip />
        <span className="-mt-[6px] w-10 pl-[10px] text-[12px] text-[#e6ecf2]">PT</span>
        <button aria-label="Ícones ocultos" className="w-5"><svg width="9" height="5"><path d="M4.500 0L9 5H0z" fill="#fff" /></svg></button>
        <svg width="16" height="14" className="mr-2" shapeRendering="crispEdges" fill="#fff">
          <path d="M0 10h4v4H0zM3 8h4v6H3zM6 5h4v9H6zM9 3h4v11H9zM12 0h4v14h-4z" fill="#5a6a7c" />
          <path d="M1 11h2v2H1zM4 9h2v4H4zM7 6h2v7H7zM10 4h2v9h-2zM13 1h2v12h-2z" />
        </svg>
        <svg width="16" height="15" className="mr-[6px]">
          <path d="M1 5h3l4-4v13l-4-4H1z" fill="#fff" stroke="#44525f" strokeWidth="0.600" />
          <path d="M10 5c1 2 1 3 0 5M12 3c2 3 2 6 0 9M14 1c2 4 2 9 0 13" stroke="#fff" fill="none" />
        </svg>
        <div className="w-[82px] text-center">
          <div>13:03</div>
          <div>09/03/2015</div>
        </div>
        <button aria-label="Mostrar área de trabalho" className="h-full w-[14px] border border-[#5a6b80] bg-gradient-to-b from-[#a4b6ca] via-[#7c91a8] to-[#a0b4ca]" />
      </div>
    </div>
  );
}

export default function App() {
  return (
    <div className="h-screen overflow-hidden bg-white pr-2 font-['Open_Sans','Noto_Sans',sans-serif]">
      <div className="flex h-full flex-col bg-[#f0f0f0]">
        <TitleBar />
        <MenuBar />
        <div className="h-[1px] shrink-0 bg-white" />
        <MainToolbar />
        <TimeframeBar />
        <main className="flex min-h-0 flex-1">
          <SidePanel />
          <div className="flex min-w-0 flex-1 flex-col">
            <div className="flex min-h-0 flex-1 border-r-2 border-[#f0f0f0]">
              <ChartWindow />
            </div>
            <div className="h-[2px] shrink-0 bg-white" />
            <ChartTabs />
          </div>
        </main>
        <StatusBar />
        <Taskbar />
      </div>
    </div>
  );
}
